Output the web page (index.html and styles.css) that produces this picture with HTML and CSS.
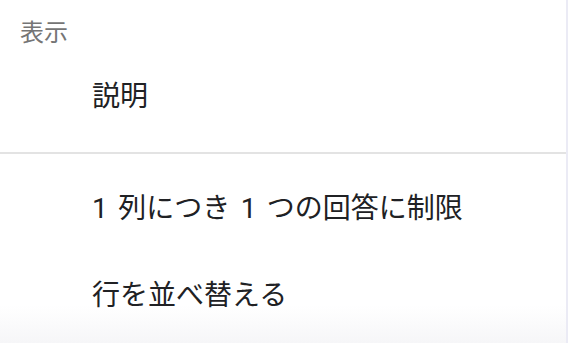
FILE: index.html
```html
<!DOCTYPE html>
<html lang="ja">
<head>
  <meta charset="utf-8">
  <title>表示</title>
  <link rel="stylesheet" href="styles.css">
</head>
<body>
  <div class="menu">
    <div class="section">
      <div class="section-title">表示</div>
      <div class="menu-item first">説明</div>
    </div>
    <div class="divider"></div>
    <div class="section second">
      <div class="menu-item">1 列につき 1 つの回答に制限</div>
      <div class="menu-item">行を並べ替える</div>
    </div>
  </div>
</body>
</html>
```

FILE: styles.css
```css
body,
html {
  margin: 0;
  padding: 0;
  height: 100%;
  overflow: hidden;
  background: #ebebf5;
}

body {
  font-family: Roboto, "Noto Sans CJK JP", sans-serif;
}

.menu {
  width: 566px;
  height: 343px;
  background: linear-gradient(to bottom, #ffffff 0, #ffffff 305px, #f6f6f8 343px);
}

.section {
  padding-bottom: 24px;
}

.section-title {
  height: 66px;
  line-height: 66px;
  padding-left: 20px;
  font-size: 24px;
  color: #757575;
}

.menu-item {
  padding-left: 92px;
  font-size: 28px;
  color: #202124;
  height: 87px;
  line-height: 87px;
  word-spacing: 3.5px;
}

.menu-item.first {
  height: 62px;
  line-height: 62px;
}

.divider {
  height: 2px;
  background: #e3e3e3;
}

.section.second {
  padding-top: 11px;
  padding-bottom: 0;
}
```
